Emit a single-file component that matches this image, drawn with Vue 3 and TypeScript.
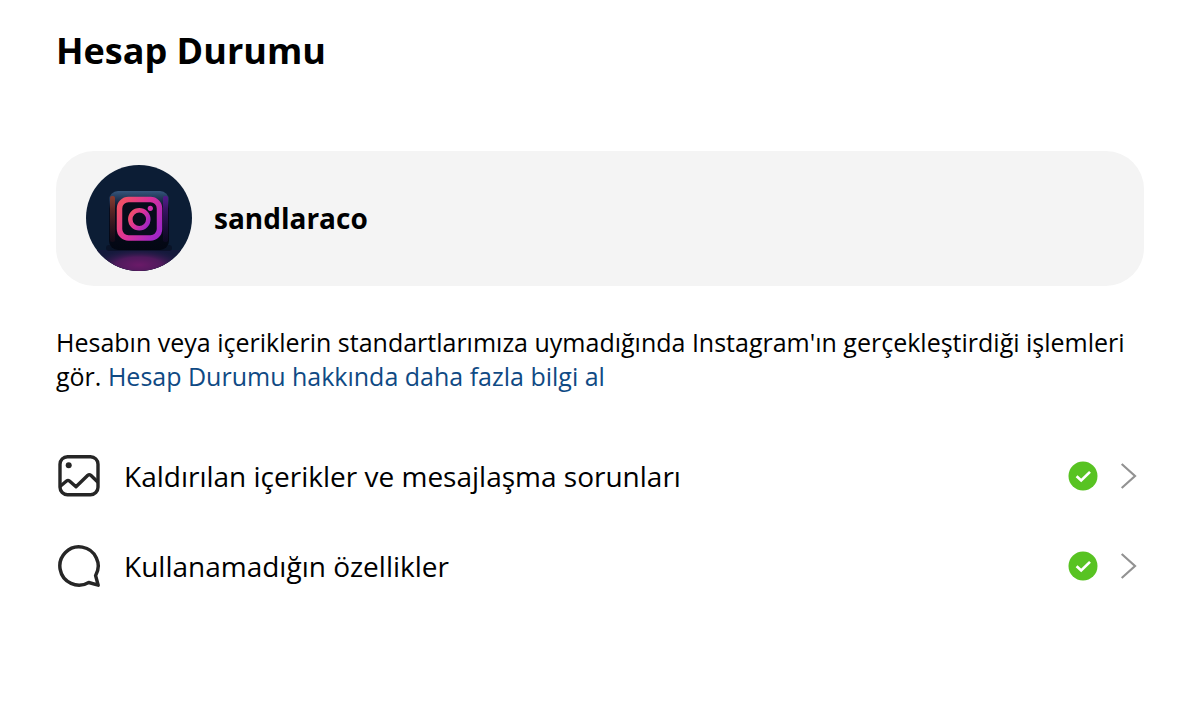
<script setup lang="ts">
interface StatusRow {
  id: string
  label: string
  icon: 'image' | 'bubble'
}

const username = 'sandlaraco'

const rows: StatusRow[] = [
  { id: 'removed', label: 'Kaldırılan içerikler ve mesajlaşma sorunları', icon: 'image' },
  { id: 'features', label: 'Kullanamadığın özellikler', icon: 'bubble' },
]
</script>

<template>
  <main class="page">
    <h1 class="title">Hesap Durumu</h1>

    <section class="account">
      <svg class="avatar" viewBox="0 0 106 106" aria-hidden="true">
        <defs>
          <clipPath id="avatar-clip"><circle cx="53" cy="53" r="53" /></clipPath>
          <linearGradient id="glyph" x1="0" y1="0.2" x2="1" y2="0.8">
            <stop offset="0" stop-color="#ee4f68" />
            <stop offset="0.45" stop-color="#dc3299" />
            <stop offset="1" stop-color="#a026c4" />
          </linearGradient>
          <linearGradient id="cube" x1="0" y1="0" x2="0" y2="1">
            <stop offset="0" stop-color="#35567c" />
            <stop offset="0.16" stop-color="#1c2f4c" />
            <stop offset="0.3" stop-color="#080d1e" />
            <stop offset="1" stop-color="#030713" />
          </linearGradient>
          <linearGradient id="edge-left" x1="0" y1="0" x2="0" y2="1">
            <stop offset="0" stop-color="#8a3a2c" />
            <stop offset="1" stop-color="#4a1420" stop-opacity="0.2" />
          </linearGradient>
          <linearGradient id="edge-right" x1="0" y1="0" x2="0" y2="1">
            <stop offset="0" stop-color="#54188a" />
            <stop offset="1" stop-color="#2a0c50" stop-opacity="0.2" />
          </linearGradient>
          <radialGradient id="floor">
            <stop offset="0" stop-color="#6a1a68" />
            <stop offset="0.5" stop-color="#4f1a5c" />
            <stop offset="1" stop-color="#221c48" stop-opacity="0" />
          </radialGradient>
        </defs>
        <g clip-path="url(#avatar-clip)">
          <rect width="106" height="106" fill="#0c1d35" />
          <rect y="85" width="106" height="21" fill="#15193c" />
          <ellipse cx="53" cy="100" rx="46" ry="16" fill="url(#floor)" />
          <rect x="20" y="80" width="66" height="6" rx="3" fill="#050a1a" opacity="0.5" />
          <rect x="23" y="26" width="60" height="59" rx="9" fill="url(#cube)" />
          <rect x="24" y="31" width="5" height="46" rx="2" fill="url(#edge-left)" />
          <rect x="77" y="31" width="5" height="46" rx="2" fill="url(#edge-right)" />
          <rect x="33.5" y="34.5" width="40" height="38.5" rx="9" fill="#070c1b" stroke="url(#glyph)" stroke-width="5.5" />
          <circle cx="53.3" cy="54.3" r="9" fill="none" stroke="url(#glyph)" stroke-width="4.5" />
          <circle cx="64.3" cy="43.3" r="2.6" fill="#cf2fae" />
        </g>
      </svg>
      <span class="username">{{ username }}</span>
    </section>

    <p class="intro">
      Hesabın veya içeriklerin standartlarımıza uymadığında Instagram'ın gerçekleştirdiği işlemleri gör.
      <a class="link" href="#">Hesap Durumu hakkında daha fazla bilgi al</a>
    </p>

    <ul class="rows">
      <li v-for="row in rows" :key="row.id">
        <button class="row" type="button">
          <svg v-if="row.icon === 'image'" class="row-icon" viewBox="0 0 46 46" aria-hidden="true">
            <rect x="4" y="3.7" width="38" height="38" rx="7.5" stroke-width="3.4" />
            <path d="M4 33.5 10.5 28Q12 26.800 13.5 28L20 33.800 31.800 22.300Q33.300 21 34.800 22.300L42 29.300" stroke-width="3.4" />
            <circle class="solid" cx="12.7" cy="12.3" r="3" />
          </svg>
          <svg v-else class="row-icon" viewBox="0 0 24 24" aria-hidden="true">
            <path d="M20.656 17.008a9.993 9.993 0 1 0-3.590 3.615L22 22Z" stroke-width="1.8" />
          </svg>
          <span class="row-label">{{ row.label }}</span>
          <svg class="badge" viewBox="0 0 30 30" role="img" aria-label="Sorun yok">
            <circle cx="15" cy="15" r="14.5" fill="#58c322" />
            <path d="M8.6 15.2 13.2 19.5 22 10.9" fill="none" stroke="#fff" stroke-width="2.7" />
          </svg>
          <svg class="chevron" viewBox="0 0 18 28" aria-hidden="true">
            <path d="M1.7 2 15 14 1.7 26" fill="none" stroke="#929292" stroke-width="2.2" />
          </svg>
        </button>
      </li>
    </ul>
  </main>
</template>

<style>
body {
  margin: 0;
  background: #fff;
}
</style>

<style scoped>
.page {
  box-sizing: border-box;
  padding: 26px 56px;
  color: #000;
  font-family: "Segoe UI", "Open Sans", "Noto Sans", sans-serif;
}

.title {
  margin: 0 0 75px;
  font-size: 36px;
  line-height: 50px;
  font-weight: 700;
}

.account {
  display: flex;
  align-items: center;
  gap: 22px;
  padding: 14px 30px 15px;
  border-radius: 38px;
  background: #f4f4f4;
}

.avatar {
  flex: none;
  width: 106px;
  height: 106px;
}

.username {
  font-size: 28px;
  line-height: 36px;
  font-weight: 700;
}

.intro {
  margin: 39px 0 0;
  font-size: 25px;
  line-height: 34px;
}

.link {
  color: #0f4a84;
  text-decoration: none;
}

.rows {
  margin: 38px 0 0;
  padding: 0;
  list-style: none;
}

.row {
  display: flex;
  align-items: center;
  width: 100%;
  height: 90px;
  padding: 0 6px 0 0;
  border: 0;
  background: none;
  color: inherit;
  font: inherit;
  text-align: left;
  cursor: pointer;
}

.row-icon {
  flex: none;
  width: 46px;
  height: 46px;
  margin-right: 22px;
  fill: none;
  stroke: #262626;
  stroke-linejoin: round;
}

.row-icon .solid {
  fill: #262626;
  stroke: none;
}

.row-label {
  flex: 1;
  font-size: 28px;
  line-height: 40px;
}

.badge {
  flex: none;
  width: 30px;
  height: 30px;
  margin-right: 22px;
}

.chevron {
  flex: none;
  width: 18px;
  height: 28px;
}
</style>
